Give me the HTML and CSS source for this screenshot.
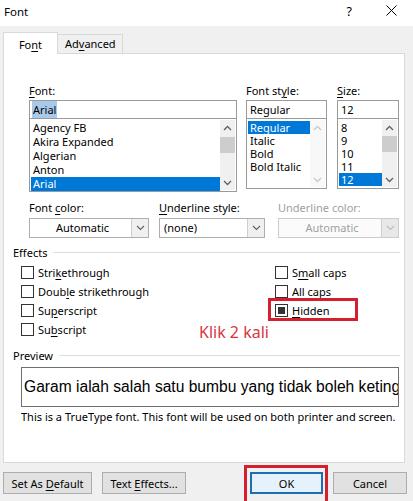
FILE: index.html
```html
<!DOCTYPE html>
<html lang="id">
<head>
    <meta charset="UTF-8">
    <meta name="viewport" content="width=device-width, initial-scale=1.0">
    <title>Font</title>
    <link rel="stylesheet" href="styles.css">
</head>
<body>

    <!-- Barra de título -->
    <div class="titlebar">
        <span class="title">Font</span>
        <span class="help">?</span>
        <svg class="close" width="11" height="11" viewBox="0 0 11 11"><path d="M0.5 0.5L10.5 10.5M10.5 0.5L0.5 10.5" stroke="#000" stroke-width="1"/></svg>
    </div>

    <!-- Abas -->
    <div class="tabs">
        <div class="tab active">Fo<u>n</u>t</div>
        <div class="tab">Ad<u>v</u>anced</div>
    </div>

    <div class="panel">

        <!-- Fonte, estilo e tamanho -->
        <div class="font-row">
            <div class="field f-font">
                <div class="label"><u>F</u>ont:</div>
                <div class="input"><span class="selected">Arial</span></div>
                <div class="list tall">
                    <div class="items">
                        <div class="item">Agency FB</div>
                        <div class="item">Akira Expanded</div>
                        <div class="item">Algerian</div>
                        <div class="item">Anton</div>
                        <div class="item on">Arial</div>
                    </div>
                    <div class="scroll">
                        <svg width="9" height="6" viewBox="0 0 9 6"><path d="M1 5L4.5 1.5L8 5" fill="none" stroke="#606060" stroke-width="1.3"/></svg>
                        <div class="track"><div class="thumb" style="top: 6px"></div></div>
                        <svg width="9" height="6" viewBox="0 0 9 6"><path d="M1 1L4.5 4.5L8 1" fill="none" stroke="#606060" stroke-width="1.3"/></svg>
                    </div>
                </div>
            </div>
            <div class="field f-style">
                <div class="label">Font st<u>y</u>le:</div>
                <div class="input">Regular</div>
                <div class="list">
                    <div class="items">
                        <div class="item on">Regular</div>
                        <div class="item">Italic</div>
                        <div class="item">Bold</div>
                        <div class="item">Bold Italic</div>
                    </div>
                    <div class="scroll disabled">
                        <svg width="9" height="6" viewBox="0 0 9 6"><path d="M1 5L4.5 1.5L8 5" fill="none" stroke="#c8c8c8" stroke-width="1.3"/></svg>
                        <div class="track"></div>
                        <svg width="9" height="6" viewBox="0 0 9 6"><path d="M1 1L4.5 4.5L8 1" fill="none" stroke="#c8c8c8" stroke-width="1.3"/></svg>
                    </div>
                </div>
            </div>
            <div class="field f-size">
                <div class="label"><u>S</u>ize:</div>
                <div class="input">12</div>
                <div class="list">
                    <div class="items">
                        <div class="item">8</div>
                        <div class="item">9</div>
                        <div class="item">10</div>
                        <div class="item">11</div>
                        <div class="item on">12</div>
                    </div>
                    <div class="scroll">
                        <svg width="9" height="6" viewBox="0 0 9 6"><path d="M1 5L4.5 1.5L8 5" fill="none" stroke="#606060" stroke-width="1.3"/></svg>
                        <div class="track"><div class="thumb" style="top: 5px"></div></div>
                        <svg width="9" height="6" viewBox="0 0 9 6"><path d="M1 1L4.5 4.5L8 1" fill="none" stroke="#606060" stroke-width="1.3"/></svg>
                    </div>
                </div>
            </div>
        </div>

        <!-- Cor e sublinhado -->
        <div class="combo-row">
            <div class="field c-color">
                <div class="label">Font <u>c</u>olor:</div>
                <div class="combo">
                    <div class="value center">Automatic</div>
                    <div class="drop"><svg width="9" height="6" viewBox="0 0 9 6"><path d="M1 1L4.5 4.5L8 1" fill="none" stroke="#606060" stroke-width="1.1"/></svg></div>
                </div>
            </div>
            <div class="field c-under">
                <div class="label"><u>U</u>nderline style:</div>
                <div class="combo">
                    <div class="value">(none)</div>
                    <div class="drop"><svg width="9" height="6" viewBox="0 0 9 6"><path d="M1 1L4.5 4.5L8 1" fill="none" stroke="#606060" stroke-width="1.1"/></svg></div>
                </div>
            </div>
            <div class="field c-ucolor disabled">
                <div class="label">Underline color:</div>
                <div class="combo">
                    <div class="value center">Automatic</div>
                    <div class="drop"><svg width="9" height="6" viewBox="0 0 9 6"><path d="M1 1L4.5 4.5L8 1" fill="none" stroke="#bcbcbc" stroke-width="1.1"/></svg></div>
                </div>
            </div>
        </div>

        <!-- Efeitos -->
        <div class="group-title"><span>Effects</span><div class="rule"></div></div>
        <div class="effects">
            <div class="col">
                <div class="check"><span class="box"></span>Stri<u>k</u>ethrough</div>
                <div class="check"><span class="box"></span>Doub<u>l</u>e strikethrough</div>
                <div class="check"><span class="box"></span>Su<u>p</u>erscript</div>
                <div class="check"><span class="box"></span>Su<u>b</u>script</div>
            </div>
            <div class="col">
                <div class="check"><span class="box"></span>S<u>m</u>all caps</div>
                <div class="check"><span class="box"></span><u>A</u>ll caps</div>
                <div class="check"><span class="box checked"></span><u>H</u>idden</div>
                <div class="mark mark-hidden"></div>
            </div>
            <div class="note-red">Klik 2 kali</div>
        </div>

        <!-- Pré-visualização -->
        <div class="group-title preview-title"><span>Preview</span><div class="rule"></div></div>
        <div class="preview">Garam ialah salah satu bumbu yang tidak boleh ketinggalan</div>
        <div class="info">This is a TrueType font. This font will be used on both printer and screen.</div>
    </div>

    <!-- Botões -->
    <div class="buttons">
        <button class="btn b-default">Set As <u>D</u>efault</button>
        <button class="btn b-effects">Text <u>E</u>ffects...</button>
        <div class="spacer"></div>
        <div class="ok-wrap">
            <button class="btn b-ok">OK</button>
            <div class="mark mark-ok"></div>
        </div>
        <button class="btn b-cancel">Cancel</button>
    </div>

</body>
</html>
```

FILE: styles.css
```css
body {
    font-family: "Noto Sans", "Open Sans", sans-serif;
    font-size: 11px;
    color: #000;
    background-color: #f0f0f0;
    margin: 0;
    padding: 0;
    width: 413px;
    height: 501px;
    overflow: hidden;
}
u {
    text-decoration-thickness: 1px;
    text-underline-offset: 2px;
}
.titlebar {
    height: 26px;
    background-color: #fff;
    display: flex;
    align-items: center;
    padding-left: 4px;
}
.title {
    font-size: 11.5px;
    flex: 1;
    margin-top: -4px;
}
.help {
    font-size: 12.5px;
    margin-right: 34px;
    margin-top: -4px;
}
.close {
    margin-right: 16px;
    margin-top: -5px;
}
.tabs {
    display: flex;
    align-items: flex-end;
    padding-left: 3px;
    margin-top: 6px;
    height: 21px;
    position: relative;
    z-index: 1;
}
.tab {
    height: 19px;
    line-height: 18px;
    box-sizing: border-box;
    background-color: #f0f0f0;
    border: 1px solid #d9d9d9;
    border-bottom: none;
}
.tab.active {
    height: 22px;
    width: 55px;
    background-color: #fff;
    line-height: 24px;
    margin-bottom: -1px;
    text-align: center;
}
.tab:not(.active) {
    width: 65px;
    border-left: none;
    padding-left: 7px;
}
.panel {
    background-color: #fff;
    border: 1px solid #d9d9d9;
    margin: 0 8px 0 3px;
    height: 410px;
    box-sizing: border-box;
    padding: 29px 0 0 25px;
}

/* Listas de fonte */
.font-row {
    display: flex;
}
.field {
    display: flex;
    flex-direction: column;
}
.label {
    height: 16px;
    line-height: 16px;
    margin-bottom: 1px;
}
.f-font { width: 208px; margin-right: 9px; }
.f-style { width: 81px; margin-right: 10px; }
.f-size { width: 62px; }
.input {
    height: 19px;
    box-sizing: border-box;
    border: 1px solid #9a9a9a;
    padding: 0 3px;
    line-height: 17px;
}
.input .selected {
    background-color: #a8c9ea;
    padding: 1px 1px;
    margin-left: -1px;
}
.list {
    height: 70px;
    box-sizing: border-box;
    border: 1px solid #9a9a9a;
    border-top: none;
    display: flex;
    padding: 1px;
}
.list.tall { height: 73px; }
.items {
    flex: 1;
    padding-top: 1px;
    min-width: 0;
}
.item {
    height: 13px;
    line-height: 13px;
    padding-left: 2px;
    white-space: nowrap;
}
.tall .item {
    height: 14px;
    line-height: 14px;
}
.item.on {
    background-color: #0078d7;
    color: #fff;
}
.scroll {
    width: 15px;
    flex-shrink: 0;
    display: flex;
    flex-direction: column;
    align-items: center;
    padding: 5px 0 4px;
    background-color: #f0f0f0;
}
.scroll.disabled {
    background-color: #f8f8f8;
}
.track {
    flex: 1;
    width: 100%;
    position: relative;
}
.thumb {
    position: absolute;
    left: 0;
    right: 0;
    height: 16px;
    background-color: #cdcdcd;
}

/* Combos */
.combo-row {
    display: flex;
    margin-top: 8px;
}
.c-color { width: 120px; margin-right: 10px; }
.c-under { width: 106px; margin-right: 13px; }
.c-ucolor { width: 121px; }
.combo-row .label { margin-bottom: 2px; }
.combo {
    display: flex;
    height: 20px;
    box-sizing: border-box;
    border: 1px solid #adadad;
    background-color: #fff;
}
.combo .value {
    flex: 1;
    line-height: 18px;
    padding-left: 4px;
}
.combo .value.center {
    text-align: center;
}
.combo .drop {
    width: 16px;
    border-left: 1px solid #cfcfcf;
    background-color: #f0f0f0;
    display: flex;
    align-items: center;
    justify-content: center;
}
.disabled .label,
.disabled .value {
    color: #a0a0a0;
}
.disabled .combo {
    background-color: #fbfbfb;
    border-color: #cccccc;
}
.disabled .drop {
    background-color: #e8e8e8;
}

/* Grupos */
.group-title {
    display: flex;
    align-items: center;
    margin: 6px 4px 0 -16px;
    height: 16px;
}
.group-title .rule {
    flex: 1;
    height: 1px;
    background-color: #dcdcdc;
    margin-left: 6px;
}
.effects {
    display: grid;
    grid-template-columns: 254px 1fr;
    margin: 3px 0 0 -8px;
    position: relative;
}
.check {
    height: 19px;
    display: flex;
    align-items: center;
}
.box {
    width: 13px;
    height: 13px;
    box-sizing: border-box;
    border: 1px solid #333;
    background-color: #fff;
    margin-right: 4px;
    display: flex;
    align-items: center;
    justify-content: center;
}
.box.checked::after {
    content: "";
    width: 7px;
    height: 7px;
    background-color: #333;
}
.col {
    position: relative;
}
.mark {
    position: absolute;
    border: 3px solid #d3202f;
    box-sizing: border-box;
}
.mark-hidden {
    left: -7px;
    top: 35px;
    width: 90px;
    height: 23px;
}
.note-red {
    position: absolute;
    left: 178px;
    top: 58px;
    color: #d9343e;
    font-size: 16px;
}
.preview-title {
    margin-top: 8px;
}
.preview {
    margin: 4px 0 0 -8px;
    width: 378px;
    height: 40px;
    box-sizing: border-box;
    border: 1px solid #6f6f6f;
    font-family: "Liberation Sans", Arial, sans-serif;
    font-size: 15.6px;
    line-height: 38px;
    padding-left: 2px;
    white-space: nowrap;
    overflow: hidden;
}
.info {
    margin: 2px 0 0 -8px;
    height: 16px;
    line-height: 16px;
    white-space: nowrap;
}

/* Botões */
.buttons {
    display: flex;
    align-items: flex-start;
    margin: 9px 6px 0 3px;
}
.btn {
    font-family: inherit;
    font-size: inherit;
    height: 22px;
    box-sizing: border-box;
    border: 1px solid #adadad;
    background-color: #e1e1e1;
    padding: 0;
    color: #000;
}
.b-default { width: 89px; margin-right: 10px; }
.b-effects { width: 84px; }
.spacer { flex: 1; }
.ok-wrap {
    position: relative;
    margin-right: 10px;
}
.b-ok {
    width: 73px;
    background-color: #e5f1fb;
    border: 2px solid #1c6fb5;
}
.mark-ok {
    left: -6px;
    top: -7px;
    width: 84px;
    height: 40px;
}
.b-cancel { width: 74px; }
```
